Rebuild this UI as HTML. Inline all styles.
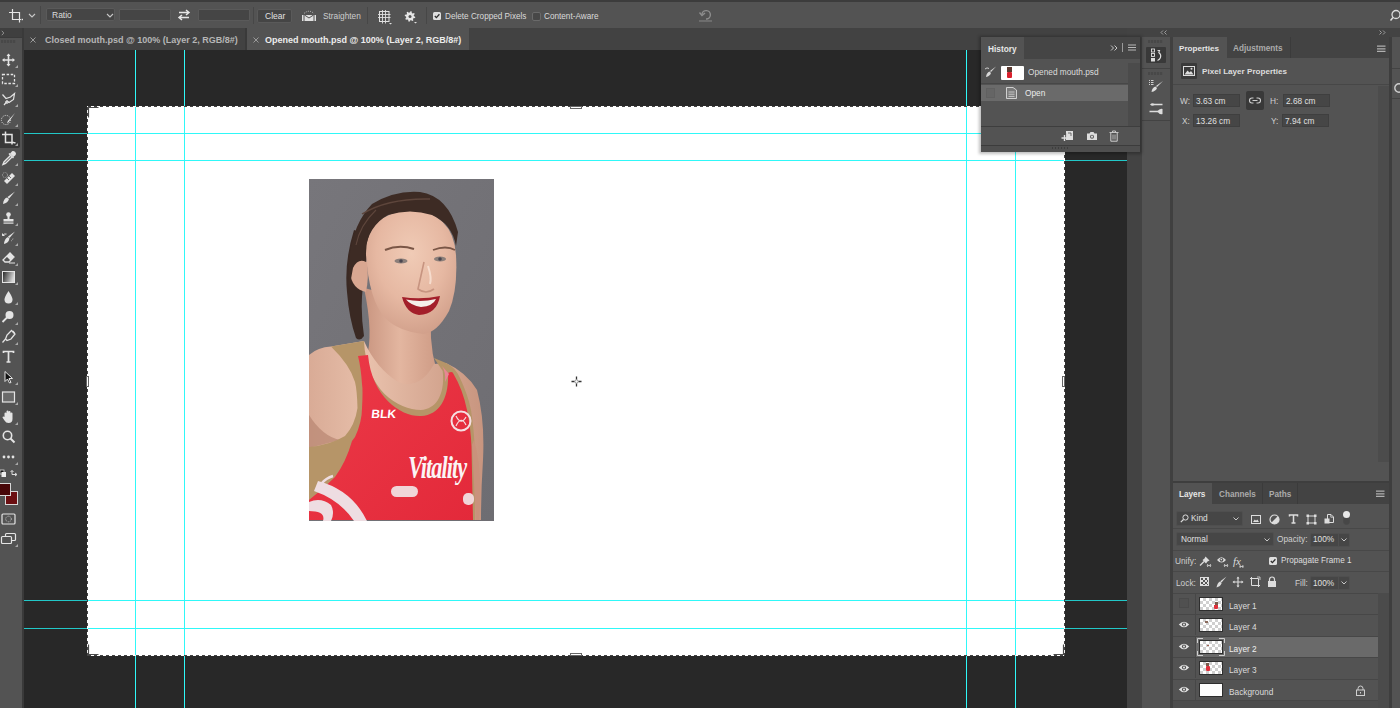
<!DOCTYPE html>
<html><head><meta charset="utf-8">
<style>
*{margin:0;padding:0;box-sizing:border-box}
html,body{width:1400px;height:708px;overflow:hidden;background:#282828;font-family:"Liberation Sans",sans-serif;font-size:8.5px;color:#d0d0d0}
.a{position:absolute}
svg{position:absolute;overflow:visible}
.t{position:absolute;white-space:nowrap;line-height:1}
</style></head><body>

<!-- top options bar -->
<div class="a" style="left:0;top:0;width:1400px;height:2px;background:#3c3c3c"></div>
<div class="a" style="left:0;top:2px;width:1400px;height:26px;background:#535353"></div>


<!-- options bar content -->
<svg style="left:7px;top:7px" width="18" height="17" viewBox="0 0 18 17">
 <path d="M5.5 2V12.5H14" stroke="#e6e6e6" stroke-width="1.2" fill="none"/>
 <path d="M2 5.5H12.5V15.5" stroke="#e6e6e6" stroke-width="1.2" fill="none"/>
 <rect x="14.6" y="11.8" width="1.4" height="1.4" fill="#e6e6e6"/>
</svg>
<svg style="left:28px;top:13px" width="8" height="5" viewBox="0 0 8 5"><path d="M1 1L4 4L7 1" stroke="#c8c8c8" stroke-width="1.1" fill="none"/></svg>
<div class="a" style="left:40px;top:6px;width:1px;height:18px;background:#474747"></div>
<div class="a" style="left:46px;top:8px;width:69px;height:13px;background:#454545;border:1px solid #5a5a5a;border-radius:2px"></div>
<div class="t" style="left:52px;top:11px;font-size:8.5px;color:#dcdcdc">Ratio</div>
<svg style="left:106px;top:13px" width="8" height="5" viewBox="0 0 8 5"><path d="M1 1L4 4L7 1" stroke="#c8c8c8" stroke-width="1.1" fill="none"/></svg>
<div class="a" style="left:119px;top:9px;width:52px;height:12px;background:#454545;border:1px solid #5a5a5a;border-radius:1px"></div>
<div class="a" style="left:198px;top:9px;width:52px;height:12px;background:#454545;border:1px solid #5a5a5a;border-radius:1px"></div>
<svg style="left:177px;top:9px" width="14" height="12" viewBox="0 0 14 12">
 <path d="M2 3.5H11.5M9 1L12 3.5L9 6" stroke="#e6e6e6" stroke-width="1.5" fill="none"/>
 <path d="M12 8.5H2.5M5 6L2 8.5L5 11" stroke="#e6e6e6" stroke-width="1.5" fill="none"/>
</svg>
<div class="a" style="left:253px;top:7px;width:1px;height:17px;background:#474747"></div>
<div class="a" style="left:257px;top:9px;width:35px;height:14px;background:#454545;border:1px solid #5a5a5a;border-radius:2px"></div>
<div class="t" style="left:265px;top:12px;font-size:8.5px;color:#e2e2e2">Clear</div>
<svg style="left:301px;top:9px" width="16" height="13" viewBox="0 0 16 13">
 <path d="M3 4.5Q8 0 13 4.5" stroke="#cfcfcf" stroke-width="0.9" stroke-dasharray="1 1.2" fill="none"/>
 <rect x="1" y="6" width="14" height="6" fill="#e0e0e0"/>
 <path d="M3.5 6L8 9L12.5 6" stroke="#535353" stroke-width="1" fill="none"/>
 <rect x="2.5" y="6" width="1" height="6" fill="#535353"/><rect x="12.5" y="6" width="1" height="6" fill="#535353"/>
</svg>
<div class="t" style="left:323px;top:12px;font-size:8.3px;color:#cdcdcd">Straighten</div>
<div class="a" style="left:367px;top:7px;width:1px;height:17px;background:#474747"></div>
<svg style="left:376px;top:9px" width="18" height="16" viewBox="0 0 18 16">
 <rect x="3.5" y="2.5" width="9.5" height="10" fill="none" stroke="#e0e0e0" stroke-width="1"/>
 <path d="M6.5 1V14.5M9.5 1V14.5M2 5.5H14.5M2 8.5H14.5" stroke="#e0e0e0" stroke-width="0.9"/>
 <path d="M13 14h3l-1.5 1.5z" fill="#e0e0e0"/>
</svg>
<svg style="left:404px;top:9px" width="16" height="16" viewBox="0 0 16 16">
 <path d="M11.30 7.40 L11.20 8.43 L9.60 8.89 L9.24 9.57 L9.75 11.15 L8.94 11.81 L7.49 11.00 L6.76 11.23 L6.00 12.70 L4.97 12.60 L4.51 11.00 L3.83 10.64 L2.25 11.15 L1.59 10.34 L2.40 8.89 L2.17 8.16 L0.70 7.40 L0.80 6.37 L2.40 5.91 L2.76 5.23 L2.25 3.65 L3.06 2.99 L4.51 3.80 L5.24 3.57 L6.00 2.10 L7.03 2.20 L7.49 3.80 L8.17 4.16 L9.75 3.65 L10.41 4.46 L9.60 5.91 L9.83 6.64z" fill="#e6e6e6" transform="rotate(6 6 7.4)"/>
 <circle cx="6" cy="7.4" r="1.5" fill="#535353"/>
 <path d="M10 13h3l-1.5 1.5z" fill="#e0e0e0"/>
</svg>
<div class="a" style="left:426px;top:7px;width:1px;height:17px;background:#474747"></div>
<div class="a" style="left:433px;top:12px;width:8px;height:8px;background:#dedede;border-radius:1.5px"></div>
<svg style="left:433px;top:12px" width="8" height="8" viewBox="0 0 8 8"><path d="M1.8 4L3.4 5.6L6.4 2.2" stroke="#2e2e2e" stroke-width="1.3" fill="none"/></svg>
<div class="t" style="left:445px;top:12.8px;font-size:8.2px;color:#dadada">Delete Cropped Pixels</div>
<div class="a" style="left:532px;top:12px;width:9px;height:9px;background:#474747;border:1px solid #6a6a6a;border-radius:2px"></div>
<div class="t" style="left:544px;top:12.8px;font-size:8.2px;color:#dadada">Content-Aware</div>
<svg style="left:698px;top:9px" width="16" height="13" viewBox="0 0 16 13">
 <path d="M4 5.5A4.2 4.2 0 1 1 8 10" stroke="#8e8e8e" stroke-width="1.4" fill="none"/>
 <path d="M1.5 3.5L4 6.5L7 4" stroke="#8e8e8e" stroke-width="1.4" fill="none"/>
 <path d="M1 12H14" stroke="#8e8e8e" stroke-width="0.9"/>
</svg>

<svg style="left:1389px;top:9px" width="14" height="14" viewBox="0 0 14 14"><circle cx="7" cy="5.5" r="4" fill="none" stroke="#dcdcdc" stroke-width="1.3"/><path d="M4 8.5L1.5 11.5" stroke="#dcdcdc" stroke-width="1.5"/></svg>
<!-- tab bar -->
<div class="a" style="left:24px;top:28px;width:1103px;height:22px;background:#424242"></div>
<div class="a" style="left:247px;top:28px;width:222px;height:22px;background:#535353"></div>


<div class="a" style="left:245px;top:28px;width:2px;height:22px;background:#3a3a3a"></div>
<svg style="left:30px;top:37px" width="6" height="6" viewBox="0 0 6 6"><path d="M0.5 0.5L5.5 5.5M5.5 0.5L0.5 5.5" stroke="#9a9a9a" stroke-width="1"/></svg>
<div class="t" style="left:45px;top:36px;font-size:9px;font-weight:bold;color:#b6b6b6">Closed mouth.psd @ 100% (Layer 2, RGB/8#)</div>
<svg style="left:253px;top:37px" width="6" height="6" viewBox="0 0 6 6"><path d="M0.5 0.5L5.5 5.5M5.5 0.5L0.5 5.5" stroke="#9a9a9a" stroke-width="1"/></svg>
<div class="t" style="left:265px;top:36px;font-size:9px;font-weight:bold;color:#ececec">Opened mouth.psd @ 100% (Layer 2, RGB/8#)</div>

<!-- left toolbar -->
<div class="a" style="left:0;top:28px;width:22px;height:680px;background:#535353"></div>
<div class="a" style="left:22px;top:28px;width:2px;height:680px;background:#3a3a3a"></div>
<div class="a" style="left:0;top:28px;width:22px;height:9px;background:#3f3f3f"></div>

<svg style="left:1px;top:30px" width="4" height="6" viewBox="0 0 4 6"><path d="M0.8 0.8L2.8 3L0.8 5.2" stroke="#9a9a9a" stroke-width="0.9" fill="none"/></svg>
<div class="a" style="left:0;top:37px;width:22px;height:1px;background:#3a3a3a"></div>
<div class="a" style="left:1px;top:40px;width:15px;height:3px;background:repeating-linear-gradient(90deg,#484848 0 2px,#505050 2px 3px)"></div>
<div class="a" style="left:0;top:129px;width:20px;height:19px;background:#383838;border-radius:0 2px 2px 0"></div>
<svg style="left:0px;top:51px" width="18" height="18" viewBox="0 0 18 18"><path d="M8.5 3.5V14.5M3 9H14" stroke="#e4e4e4" stroke-width="1.6"/><path d="M8.5 2.5L10.5 5H6.5zM8.5 15.5L10.5 13H6.5zM2 9L4.5 7V11zM15 9L12.5 7V11z" fill="#e4e4e4"/></svg>
<svg style="left:15px;top:65px" width="3" height="3" viewBox="0 0 3 3"><path d="M3 0V3H0z" fill="#a8a8a8"/></svg>
<svg style="left:0px;top:70px" width="18" height="18" viewBox="0 0 18 18"><rect x="2.5" y="4.5" width="12" height="9" fill="none" stroke="#e4e4e4" stroke-width="1.3" stroke-dasharray="2.5 1.6"/></svg>
<svg style="left:15px;top:84px" width="3" height="3" viewBox="0 0 3 3"><path d="M3 0V3H0z" fill="#a8a8a8"/></svg>
<svg style="left:0px;top:90px" width="18" height="18" viewBox="0 0 18 18"><path d="M2.5 4.5L6 8.5L10.5 7L14.5 3.5L13.5 9.5L9 12.5L7 11.5L4 15" stroke="#e4e4e4" stroke-width="1.2" fill="none"/><circle cx="7" cy="12" r="1.3" fill="none" stroke="#e4e4e4"/></svg>
<svg style="left:15px;top:104px" width="3" height="3" viewBox="0 0 3 3"><path d="M3 0V3H0z" fill="#a8a8a8"/></svg>
<svg style="left:0px;top:110px" width="18" height="18" viewBox="0 0 18 18"><circle cx="6" cy="10" r="4.6" fill="none" stroke="#e4e4e4" stroke-width="1" stroke-dasharray="1 1.2"/><path d="M15 3L10.5 9.5Q9 12.5 7 13.5Q8 10 10 8.5z" fill="#e4e4e4"/></svg>
<svg style="left:15px;top:124px" width="3" height="3" viewBox="0 0 3 3"><path d="M3 0V3H0z" fill="#a8a8a8"/></svg>
<svg style="left:0px;top:129px" width="18" height="18" viewBox="0 0 18 18"><path d="M5.5 2.5V13.5H14" stroke="#e4e4e4" stroke-width="1.5" fill="none"/><path d="M2 5.5H12V15.5" stroke="#e4e4e4" stroke-width="1.5" fill="none"/><rect x="14" y="13" width="1.5" height="1.5" fill="#e4e4e4"/></svg>
<svg style="left:15px;top:143px" width="3" height="3" viewBox="0 0 3 3"><path d="M3 0V3H0z" fill="#a8a8a8"/></svg>
<svg style="left:0px;top:149px" width="18" height="18" viewBox="0 0 18 18"><path d="M12.5 2Q15.5 1.5 16 4.5Q16 6 14.5 7L13.5 8L10 4.5L11 3.5Q11.5 2.5 12.5 2z" fill="#e4e4e4"/><path d="M9 4.5L13.5 9" stroke="#e4e4e4" stroke-width="1.5"/><path d="M10.5 6.5L4 13L3 15.5L5.5 14.5L12 8" stroke="#e4e4e4" stroke-width="1.4" fill="none"/></svg>
<svg style="left:15px;top:163px" width="3" height="3" viewBox="0 0 3 3"><path d="M3 0V3H0z" fill="#a8a8a8"/></svg>
<svg style="left:0px;top:169px" width="18" height="18" viewBox="0 0 18 18"><path d="M4 12L12 4L15 7L7 15z" fill="#e4e4e4"/><path d="M7 9L9 11M9 7L11 9" stroke="#535353" stroke-width="0.8"/><circle cx="5" cy="6" r="2.5" fill="none" stroke="#e4e4e4" stroke-width="0.6" stroke-dasharray="0.8 0.8"/></svg>
<svg style="left:15px;top:183px" width="3" height="3" viewBox="0 0 3 3"><path d="M3 0V3H0z" fill="#a8a8a8"/></svg>
<svg style="left:0px;top:189px" width="18" height="18" viewBox="0 0 18 18"><path d="M15 2.5L9 9.5L7.5 8z" fill="#e4e4e4"/><path d="M7 8.5Q3.5 9.5 3 15Q8 14 9 10z" fill="#e4e4e4"/></svg>
<svg style="left:15px;top:203px" width="3" height="3" viewBox="0 0 3 3"><path d="M3 0V3H0z" fill="#a8a8a8"/></svg>
<svg style="left:0px;top:209px" width="18" height="18" viewBox="0 0 18 18"><circle cx="8.5" cy="5.5" r="2.3" fill="#e4e4e4"/><path d="M7.5 7H9.5V10H13.5V12.5H3.5V10H7.5z" fill="#e4e4e4"/><rect x="3.5" y="13.5" width="10" height="1.2" fill="#e4e4e4"/></svg>
<svg style="left:15px;top:223px" width="3" height="3" viewBox="0 0 3 3"><path d="M3 0V3H0z" fill="#a8a8a8"/></svg>
<svg style="left:0px;top:229px" width="18" height="18" viewBox="0 0 18 18"><path d="M15 2.5L9.5 9L8 7.5z" fill="#e4e4e4"/><path d="M8 8Q4.5 9.5 4 15Q8.5 14 9.5 9.5z" fill="#e4e4e4"/><path d="M2.5 6.5Q4 4.5 6.5 5M2.5 6.5L2.5 4.5M2.5 6.5L4.5 6.5" stroke="#e4e4e4" stroke-width="1" fill="none"/><path d="M11 12Q13 11 13 9" stroke="#e4e4e4" stroke-width="0.7" stroke-dasharray="0.8 0.8" fill="none"/></svg>
<svg style="left:15px;top:243px" width="3" height="3" viewBox="0 0 3 3"><path d="M3 0V3H0z" fill="#a8a8a8"/></svg>
<svg style="left:0px;top:249px" width="18" height="18" viewBox="0 0 18 18"><path d="M3 11L10 4L14 8L9 13H5z" fill="none" stroke="#e4e4e4" stroke-width="1.3"/><path d="M6.5 7.5L10.5 11.5L14 8L10 4z" fill="#e4e4e4"/><path d="M9 14H15" stroke="#e4e4e4" stroke-width="1"/></svg>
<svg style="left:15px;top:263px" width="3" height="3" viewBox="0 0 3 3"><path d="M3 0V3H0z" fill="#a8a8a8"/></svg>
<svg style="left:0px;top:268px" width="18" height="18" viewBox="0 0 18 18"><defs><linearGradient id="g1" x1="0" y1="0" x2="1" y2="0.3"><stop offset="0" stop-color="#202020"/><stop offset="1" stop-color="#d8d8d8"/></linearGradient></defs><rect x="2.5" y="3.5" width="12" height="11" fill="url(#g1)" stroke="#e4e4e4" stroke-width="1"/></svg>
<svg style="left:15px;top:282px" width="3" height="3" viewBox="0 0 3 3"><path d="M3 0V3H0z" fill="#a8a8a8"/></svg>
<svg style="left:0px;top:288px" width="18" height="18" viewBox="0 0 18 18"><path d="M8.5 3Q12.5 9 12.5 11.5A4 4 0 0 1 4.5 11.5Q4.5 9 8.5 3z" fill="#e4e4e4"/></svg>
<svg style="left:15px;top:302px" width="3" height="3" viewBox="0 0 3 3"><path d="M3 0V3H0z" fill="#a8a8a8"/></svg>
<svg style="left:0px;top:308px" width="18" height="18" viewBox="0 0 18 18"><circle cx="9.5" cy="7" r="4" fill="#e4e4e4"/><path d="M7 9.5L2.5 14" stroke="#e4e4e4" stroke-width="1.8"/></svg>
<svg style="left:15px;top:322px" width="3" height="3" viewBox="0 0 3 3"><path d="M3 0V3H0z" fill="#a8a8a8"/></svg>
<svg style="left:0px;top:328px" width="18" height="18" viewBox="0 0 18 18"><path d="M11.5 2.5L15 6L11 11L7 12.5L5.5 11L7 7z" fill="none" stroke="#e4e4e4" stroke-width="1.3"/><path d="M5.5 11L2.5 14.5" stroke="#e4e4e4" stroke-width="1.2"/><path d="M12.5 3L14.5 5" stroke="#e4e4e4" stroke-width="1.6"/></svg>
<svg style="left:15px;top:342px" width="3" height="3" viewBox="0 0 3 3"><path d="M3 0V3H0z" fill="#a8a8a8"/></svg>
<svg style="left:0px;top:348px" width="18" height="18" viewBox="0 0 18 18"><path d="M3.5 5V3.5H13.5V5M8.5 3.5V14M6.5 14H10.5" stroke="#e4e4e4" stroke-width="1.7" fill="none"/></svg>
<svg style="left:0px;top:368px" width="18" height="18" viewBox="0 0 18 18"><path d="M5 3.5L12.5 10.5H9L11 14.5L9.5 15L7.5 11L5 13.5z" fill="#111" stroke="#e4e4e4" stroke-width="1"/></svg>
<svg style="left:15px;top:382px" width="3" height="3" viewBox="0 0 3 3"><path d="M3 0V3H0z" fill="#a8a8a8"/></svg>
<svg style="left:0px;top:388px" width="18" height="18" viewBox="0 0 18 18"><rect x="2.5" y="4" width="12" height="10" fill="#6a6a6a" stroke="#e4e4e4" stroke-width="1.2"/></svg>
<svg style="left:15px;top:402px" width="3" height="3" viewBox="0 0 3 3"><path d="M3 0V3H0z" fill="#a8a8a8"/></svg>
<svg style="left:0px;top:408px" width="18" height="18" viewBox="0 0 18 18"><path d="M4.5 9V5.5A1 1 0 0 1 6.5 5.5V8.5V3.5A1 1 0 0 1 8.5 3.5V8.5V4A1 1 0 0 1 10.5 4V8.5V5.5A1 1 0 0 1 12.5 5.5V11Q12.5 15 8.5 15Q6 15 4.5 12.5L2.5 9.5Q2.5 8.5 3.5 8.5z" fill="#e4e4e4"/></svg>
<svg style="left:15px;top:422px" width="3" height="3" viewBox="0 0 3 3"><path d="M3 0V3H0z" fill="#a8a8a8"/></svg>
<svg style="left:0px;top:428px" width="18" height="18" viewBox="0 0 18 18"><circle cx="7.5" cy="7.5" r="4.2" fill="none" stroke="#e4e4e4" stroke-width="1.6"/><path d="M10.5 10.5L14.5 14.5" stroke="#e4e4e4" stroke-width="2"/></svg>
<svg style="left:0px;top:448px" width="18" height="18" viewBox="0 0 18 18"><circle cx="4" cy="9" r="1.4" fill="#e4e4e4"/><circle cx="8.5" cy="9" r="1.4" fill="#e4e4e4"/><circle cx="13" cy="9" r="1.4" fill="#e4e4e4"/></svg>
<svg style="left:15px;top:462px" width="3" height="3" viewBox="0 0 3 3"><path d="M3 0V3H0z" fill="#a8a8a8"/></svg>
<svg style="left:0px;top:469px" width="20" height="10" viewBox="0 0 20 10"><rect x="0" y="1" width="4" height="4" fill="#111" stroke="#ddd" stroke-width="0.8"/><rect x="1.5" y="3" width="4.5" height="5" fill="#eee"/><path d="M12 1.5V5.5H16.5M15 4L17 5.5L15 7M12 1.5L10.5 3M12 1.5L13.5 3" stroke="#ddd" stroke-width="1" fill="none"/></svg>
<div class="a" style="left:5px;top:491px;width:13px;height:14px;background:#6b0f12;border:1.2px solid #d8d8d8"></div>
<div class="a" style="left:0px;top:483px;width:11px;height:13px;background:#470608;border:1.2px solid #d8d8d8;border-left:none"></div>
<svg style="left:0px;top:510px" width="18" height="18" viewBox="0 0 18 18"><rect x="2" y="4" width="13" height="10" rx="1" fill="none" stroke="#e4e4e4" stroke-width="1.2"/><circle cx="8.5" cy="9" r="2.8" fill="none" stroke="#e4e4e4" stroke-width="0.8" stroke-dasharray="1 1"/></svg>
<svg style="left:0px;top:530px" width="18" height="18" viewBox="0 0 18 18"><rect x="5.5" y="3.5" width="10" height="7" rx="1" fill="none" stroke="#e4e4e4" stroke-width="1.2"/><rect x="1.5" y="6.5" width="10" height="7" rx="1" fill="#535353" stroke="#e4e4e4" stroke-width="1.2"/></svg>
<svg style="left:15px;top:544px" width="3" height="3" viewBox="0 0 3 3"><path d="M3 0V3H0z" fill="#a8a8a8"/></svg>

<!-- right dock -->
<div class="a" style="left:1127px;top:28px;width:15px;height:680px;background:#434343"></div>
<div class="a" style="left:1142px;top:28px;width:258px;height:9px;background:#434343"></div>
<div class="a" style="left:1142px;top:37px;width:28px;height:671px;background:#535353"></div>
<div class="a" style="left:1170px;top:37px;width:3px;height:671px;background:#404040"></div>
<div class="a" style="left:1173px;top:37px;width:216px;height:671px;background:#535353"></div>
<div class="a" style="left:1389px;top:37px;width:3px;height:671px;background:#3e3e3e"></div>
<div class="a" style="left:1392px;top:37px;width:8px;height:671px;background:#535353"></div>


<!-- dock header arrows -->
<svg style="left:1160px;top:30px" width="7" height="5" viewBox="0 0 7 5"><path d="M3 0.5L1 2.5L3 4.5M6.5 0.5L4.5 2.5L6.5 4.5" stroke="#a8a8a8" stroke-width="0.9" fill="none"/></svg>
<svg style="left:1379px;top:30px" width="7" height="5" viewBox="0 0 7 5"><path d="M0.5 0.5L2.5 2.5L0.5 4.5M4 0.5L6 2.5L4 4.5" stroke="#a8a8a8" stroke-width="0.9" fill="none"/></svg>
<!-- icon column -->
<div class="a" style="left:1148px;top:40px;width:15px;height:3px;background:repeating-linear-gradient(90deg,#484848 0 2px,#505050 2px 3px)"></div>
<div class="a" style="left:1146px;top:47px;width:20px;height:16px;background:#393939;border-radius:1px"></div>
<svg style="left:1149px;top:48px" width="14" height="14" viewBox="0 0 14 14">
 <rect x="2.5" y="1" width="3" height="3" fill="none" stroke="#ddd" stroke-width="0.9"/>
 <rect x="2.5" y="5.5" width="3" height="3" fill="none" stroke="#ddd" stroke-width="0.9"/>
 <rect x="2" y="10" width="4" height="3.5" fill="#ddd"/>
 <path d="M8.5 2.5H10.5L9.8 4.5Q12.5 6.5 11.5 9.5Q10.8 11.5 8.5 12.5" stroke="#ddd" stroke-width="1.1" fill="none"/>
</svg>
<div class="a" style="left:1142px;top:68px;width:28px;height:1px;background:#434343"></div>
<div class="a" style="left:1148px;top:72px;width:15px;height:3px;background:repeating-linear-gradient(90deg,#484848 0 2px,#505050 2px 3px)"></div>
<svg style="left:1148px;top:79px" width="16" height="14" viewBox="0 0 16 14">
 <path d="M1 1.5H2M1 3.5H2M1 5.5H2M3 1.5H5.5M3 3.5H5.5M3 5.5H5.5" stroke="#ddd" stroke-width="0.9"/>
 <path d="M15 2L9 8L8 7z" fill="#ddd"/><path d="M7.5 7.5Q4 8.5 3.5 13Q8 12 9 9z" fill="#ddd"/>
</svg>
<svg style="left:1148px;top:101px" width="16" height="14" viewBox="0 0 16 14">
 <path d="M6 3.5H14.5M1.5 10.5H10" stroke="#ddd" stroke-width="1.3"/>
 <path d="M2 3.5Q4.5 1 7 3.5Q4.5 6 2 3.5z" fill="#ddd"/>
 <path d="M9 10.5Q12 7 14.5 8V13Q12 14 9 10.5z" fill="#ddd"/>
</svg>
<div class="a" style="left:1142px;top:120px;width:28px;height:1px;background:#434343"></div>
<div class="a" style="left:1392px;top:68px;width:8px;height:1px;background:#434343"></div>
<div class="a" style="left:1392px;top:98px;width:8px;height:1px;background:#434343"></div>
<svg style="left:1393px;top:82px" width="7" height="12" viewBox="0 0 7 12"><circle cx="6" cy="6" r="4.2" fill="none" stroke="#cfcfcf" stroke-width="1.4"/></svg>

<!-- Properties panel -->
<div class="a" style="left:1173px;top:37px;width:216px;height:21px;background:#434343"></div>
<div class="a" style="left:1173px;top:37px;width:54px;height:21px;background:#535353"></div>
<div class="a" style="left:1290px;top:37px;width:1px;height:21px;background:#3b3b3b"></div>
<div class="t" style="left:1179px;top:45px;font-size:8.1px;font-weight:bold;color:#e6e6e6">Properties</div>
<div class="t" style="left:1233px;top:45px;font-size:8.2px;font-weight:bold;color:#ababab">Adjustments</div>
<svg style="left:1377px;top:45px" width="9" height="8" viewBox="0 0 9 8"><path d="M0 1.2H8.5M0 3.8H8.5M0 6.4H8.5" stroke="#b0b0b0" stroke-width="1.2"/></svg>
<div class="a" style="left:1181px;top:63px;width:16px;height:16px;background:#3a3a3a;border-radius:1px"></div>
<svg style="left:1183px;top:66px" width="12" height="10" viewBox="0 0 12 10"><rect x="0.5" y="0.5" width="11" height="9" fill="none" stroke="#ddd" stroke-width="1"/><path d="M1.5 8.5L4.5 4.5L6.5 6.5L8 5L10.5 8.5z" fill="#ddd"/><circle cx="8.5" cy="2.8" r="1" fill="#ddd"/></svg>
<div class="t" style="left:1202px;top:68px;font-size:8.1px;font-weight:bold;color:#dedede">Pixel Layer Properties</div>
<div class="a" style="left:1173px;top:84px;width:216px;height:1px;background:#474747"></div>
<div class="a" style="left:1378px;top:86px;width:11px;height:376px;background:#4c4c4c"></div>
<div class="t" style="left:1180px;top:97px;font-size:8.3px;color:#cfcfcf">W:</div>
<div class="a" style="left:1193px;top:94px;width:47px;height:13px;background:#464646;border:1px solid #3f3f3f"></div>
<div class="t" style="left:1196px;top:97px;font-size:8.3px;color:#e0e0e0">3.63 cm</div>
<div class="a" style="left:1246px;top:91px;width:18px;height:19px;background:#393939;border-radius:2px"></div>
<svg style="left:1249px;top:97px" width="12" height="7" viewBox="0 0 12 7"><path d="M4.5 1H3A2.5 2.5 0 0 0 3 6H4.5M7.5 1H9A2.5 2.5 0 0 1 9 6H7.5M3.5 3.5H8.5" stroke="#cfcfcf" stroke-width="1.1" fill="none"/></svg>
<div class="t" style="left:1270px;top:97px;font-size:8.3px;color:#cfcfcf">H:</div>
<div class="a" style="left:1283px;top:94px;width:47px;height:13px;background:#464646;border:1px solid #3f3f3f"></div>
<div class="t" style="left:1286px;top:97px;font-size:8.3px;color:#e0e0e0">2.68 cm</div>
<div class="t" style="left:1182px;top:117px;font-size:8.3px;color:#cfcfcf">X:</div>
<div class="a" style="left:1193px;top:114px;width:47px;height:13px;background:#464646;border:1px solid #3f3f3f"></div>
<div class="t" style="left:1196px;top:117px;font-size:8.3px;color:#e0e0e0">13.26 cm</div>
<div class="t" style="left:1271px;top:117px;font-size:8.3px;color:#cfcfcf">Y:</div>
<div class="a" style="left:1282px;top:114px;width:47px;height:13px;background:#464646;border:1px solid #3f3f3f"></div>
<div class="t" style="left:1285px;top:117px;font-size:8.3px;color:#e0e0e0">7.94 cm</div>


<!-- Layers panel -->
<div class="a" style="left:1173px;top:481px;width:216px;height:2px;background:#3e3e3e"></div>
<div class="a" style="left:1173px;top:483px;width:216px;height:21px;background:#434343"></div>
<div class="a" style="left:1173px;top:483px;width:39px;height:21px;background:#535353"></div>
<div class="a" style="left:1262px;top:483px;width:1px;height:21px;background:#3b3b3b"></div>
<div class="a" style="left:1297px;top:483px;width:1px;height:21px;background:#3b3b3b"></div>
<div class="t" style="left:1179px;top:491px;font-size:8.2px;font-weight:bold;color:#e6e6e6">Layers</div>
<div class="t" style="left:1219px;top:491px;font-size:8.2px;font-weight:bold;color:#ababab">Channels</div>
<div class="t" style="left:1269px;top:491px;font-size:8.2px;font-weight:bold;color:#ababab">Paths</div>
<svg style="left:1376px;top:490px" width="9" height="8" viewBox="0 0 9 8"><path d="M0 1.2H8.5M0 3.8H8.5M0 6.4H8.5" stroke="#b0b0b0" stroke-width="1.2"/></svg>

<div class="a" style="left:1176px;top:511px;width:67px;height:15px;background:#464646;border:1px solid #4f4f4f;border-radius:2px"></div>
<svg style="left:1180px;top:514px" width="9" height="9" viewBox="0 0 9 9"><circle cx="5.5" cy="3.5" r="2.6" fill="none" stroke="#ddd" stroke-width="1"/><path d="M3.5 5.5L0.8 8.2" stroke="#ddd" stroke-width="1.2"/></svg>
<div class="t" style="left:1191px;top:514px;font-size:8.3px;color:#e0e0e0">Kind</div>
<svg style="left:1233px;top:517px" width="6" height="4" viewBox="0 0 6 4"><path d="M0.5 0.5L3 3L5.5 0.5" stroke="#c8c8c8" stroke-width="1" fill="none"/></svg>
<svg style="left:1250.5px;top:514.5px" width="10" height="9" viewBox="0 0 10 9"><rect x="0.5" y="0.5" width="9" height="8" fill="none" stroke="#ddd" stroke-width="1"/><path d="M2 7L3.8 4.5L5 5.8L6.3 4.5L8 7z" fill="#ddd"/></svg>
<svg style="left:1269px;top:513.5px" width="11" height="11" viewBox="0 0 11 11"><circle cx="5.5" cy="5.5" r="4.5" fill="none" stroke="#ddd" stroke-width="1.2"/><path d="M8.7 2.3A4.5 4.5 0 0 1 2.3 8.7z" fill="#ddd"/></svg>
<svg style="left:1288px;top:513.5px" width="11" height="10" viewBox="0 0 11 10"><path d="M1.5 2.5V1H9.5V2.5M5.5 1V9M3.5 9H7.5" stroke="#ddd" stroke-width="1.5" fill="none"/></svg>
<svg style="left:1305.5px;top:513.5px" width="11" height="11" viewBox="0 0 11 11"><rect x="2" y="2" width="7" height="7" fill="none" stroke="#ddd" stroke-width="1"/><rect x="0.5" y="0.5" width="2.5" height="2.5" fill="#ddd"/><rect x="8" y="0.5" width="2.5" height="2.5" fill="#ddd"/><rect x="0.5" y="8" width="2.5" height="2.5" fill="#ddd"/><rect x="8" y="8" width="2.5" height="2.5" fill="#ddd"/></svg>
<svg style="left:1324px;top:514px" width="10" height="10" viewBox="0 0 10 10"><path d="M3.5 0.5H7L9.5 3V8.5H3.5z" fill="none" stroke="#ddd" stroke-width="1"/><path d="M6.8 0.5V3.2H9.5" stroke="#ddd" stroke-width="0.8" fill="none"/><rect x="0.5" y="4.5" width="5" height="5" fill="#ddd"/></svg>
<div class="a" style="left:1343px;top:512px;width:7px;height:13px;background:#474747;border:1px solid #4a4a4a;border-radius:3.5px"></div>
<div class="a" style="left:1343px;top:511px;width:7px;height:7px;background:#e8e8e8;border-radius:50%"></div>
<div class="a" style="left:1173px;top:528px;width:216px;height:1px;background:#484848"></div>

<div class="a" style="left:1176px;top:532px;width:98px;height:14px;background:#464646;border:1px solid #4f4f4f;border-radius:2px"></div>
<div class="t" style="left:1181px;top:535px;font-size:8.3px;color:#e0e0e0">Normal</div>
<svg style="left:1264px;top:538px" width="6" height="4" viewBox="0 0 6 4"><path d="M0.5 0.5L3 3L5.5 0.5" stroke="#c8c8c8" stroke-width="1" fill="none"/></svg>
<div class="t" style="left:1277px;top:535px;font-size:8.3px;color:#cfcfcf">Opacity:</div>
<div class="a" style="left:1310px;top:533px;width:40px;height:14px;background:#464646;border:1px solid #4f4f4f;border-radius:2px"></div>
<div class="a" style="left:1338px;top:533px;width:1px;height:14px;background:#4f4f4f"></div>
<div class="t" style="left:1313px;top:535px;font-size:8.3px;color:#e0e0e0">100%</div>
<svg style="left:1341px;top:538px" width="6" height="4" viewBox="0 0 6 4"><path d="M0.5 0.5L3 3L5.5 0.5" stroke="#c8c8c8" stroke-width="1" fill="none"/></svg>
<div class="a" style="left:1173px;top:550px;width:216px;height:1px;background:#484848"></div>

<div class="t" style="left:1175px;top:557px;font-size:8.3px;color:#cfcfcf">Unify:</div>
<svg style="left:1199px;top:555px" width="14" height="13" viewBox="0 0 14 13"><path d="M6.5 1.5L10.5 5.5L8.5 6.5L7 8.5L3.5 5L5.5 3.5z" fill="#ddd"/><path d="M5 6.5L1 10.5" stroke="#ddd" stroke-width="1.2"/><path d="M8.5 10.5H11.5M8.8 9Q7.8 10.5 8.8 12M11.2 9Q12.2 10.5 11.2 12" stroke="#ddd" stroke-width="0.8" fill="none"/></svg>
<svg style="left:1216px;top:555px" width="14" height="13" viewBox="0 0 14 13"><path d="M1 5Q5.5 -0.5 10 5Q5.5 10 1 5z" fill="#ddd"/><circle cx="5.5" cy="4.8" r="1.9" fill="#535353"/><circle cx="5.3" cy="4.6" r="0.8" fill="#ddd"/><path d="M8.5 10.5H11.5M8.8 9Q7.8 10.5 8.8 12M11.2 9Q12.2 10.5 11.2 12" stroke="#ddd" stroke-width="0.8" fill="none"/></svg>
<div class="t" style="left:1233px;top:556px;font-size:11px;font-style:italic;font-family:'Liberation Serif',serif;color:#ddd">fx</div>
<svg style="left:1238px;top:564px" width="7" height="5" viewBox="0 0 7 5"><path d="M2 2.5H5M2.3 1Q1.3 2.5 2.3 4M4.7 1Q5.7 2.5 4.7 4" stroke="#ddd" stroke-width="0.8" fill="none"/></svg>
<div class="a" style="left:1269px;top:557px;width:8px;height:8px;background:#dedede;border-radius:1.5px"></div>
<svg style="left:1269px;top:557px" width="8" height="8" viewBox="0 0 8 8"><path d="M1.8 4L3.4 5.6L6.4 2.2" stroke="#2e2e2e" stroke-width="1.3" fill="none"/></svg>
<div class="t" style="left:1281px;top:557px;font-size:8.2px;color:#dedede">Propagate Frame 1</div>
<div class="a" style="left:1173px;top:571px;width:216px;height:1px;background:#484848"></div>

<div class="t" style="left:1176px;top:579px;font-size:8.3px;color:#cfcfcf">Lock:</div>
<div class="a" style="left:1200px;top:577px;width:9px;height:9px;border:1px solid #ddd;background-color:#535353;background-image:linear-gradient(45deg,#ddd 25%,transparent 25%,transparent 75%,#ddd 75%),linear-gradient(45deg,#ddd 25%,transparent 25%,transparent 75%,#ddd 75%);background-size:4px 4px;background-position:0 0,2px 2px"></div>
<svg style="left:1216px;top:576px" width="11" height="12" viewBox="0 0 11 12"><path d="M10.5 0.5L5.5 6.5L4.3 5.3z" fill="#ddd"/><path d="M4 5.5Q1.5 6.5 0.5 11.5Q4.5 10.5 5.7 7z" fill="#ddd"/></svg>
<svg style="left:1232px;top:576px" width="12" height="12" viewBox="0 0 12 12"><path d="M6 1.5V10.5M1.5 6H10.5" stroke="#ddd" stroke-width="1.1"/><path d="M6 0.5L7.5 2.5H4.5zM6 11.5L7.5 9.5H4.5zM0.5 6L2.5 4.5V7.5zM11.5 6L9.5 4.5V7.5z" fill="#ddd"/></svg>
<svg style="left:1249px;top:576px" width="12" height="12" viewBox="0 0 12 12"><path d="M2.5 1V9.5H11M1 2.5H9.5V11" stroke="#ddd" stroke-width="1" fill="none"/><path d="M8 1L11 1L11 4" stroke="#ddd" stroke-width="0.8" fill="none"/></svg>
<svg style="left:1267px;top:576px" width="10" height="11" viewBox="0 0 10 11"><path d="M2.5 5V3.5A2.5 2.5 0 0 1 7.5 3.5V5" stroke="#ddd" stroke-width="1.2" fill="none"/><rect x="1" y="5" width="8" height="6" fill="#ddd"/></svg>
<div class="t" style="left:1295px;top:579px;font-size:8.3px;color:#cfcfcf">Fill:</div>
<div class="a" style="left:1310px;top:576px;width:40px;height:14px;background:#464646;border:1px solid #4f4f4f;border-radius:2px"></div>
<div class="a" style="left:1338px;top:576px;width:1px;height:14px;background:#4f4f4f"></div>
<div class="t" style="left:1313px;top:579px;font-size:8.3px;color:#e0e0e0">100%</div>
<svg style="left:1341px;top:581px" width="6" height="4" viewBox="0 0 6 4"><path d="M0.5 0.5L3 3L5.5 0.5" stroke="#c8c8c8" stroke-width="1" fill="none"/></svg>

<div class="a" style="left:1173px;top:593px;width:205px;height:107px;background:#535353"></div>
<div class="a" style="left:1378px;top:593px;width:11px;height:115px;background:#4b4b4b"></div>
<div class="a" style="left:1173px;top:700px;width:205px;height:8px;background:#4d4d4d"></div>
<div class="a" style="left:1173px;top:593px;width:205px;height:1px;background:#474747"></div>
<div class="a" style="left:1195px;top:593px;width:1px;height:21px;background:#474747"></div>
<div class="a" style="left:1179px;top:598px;width:10px;height:10px;border:1px solid #4a4a4a;background:#505050"></div>
<div class="a" style="left:1199px;top:597px;width:24px;height:14px;background-color:#fff;background-image:linear-gradient(45deg,#cfcfcf 25%,transparent 25%,transparent 75%,#cfcfcf 75%),linear-gradient(45deg,#cfcfcf 25%,transparent 25%,transparent 75%,#cfcfcf 75%);background-size:6px 6px;background-position:0 0,3px 3px;border:1px solid #2e2e2e"></div>
<div class="a" style="left:1214.5px;top:602px;width:3px;height:3px;background:#7a5a4c"></div><div class="a" style="left:1214px;top:605px;width:4px;height:4px;background:#e0303c;border-radius:0 0 1px 1px"></div>
<div class="t" style="left:1229px;top:601.8px;font-size:8.3px;color:#dcdcdc">Layer 1</div>
<div class="a" style="left:1173px;top:614px;width:205px;height:1px;background:#474747"></div>
<div class="a" style="left:1195px;top:614px;width:1px;height:21px;background:#474747"></div>
<svg style="left:1178px;top:620px" width="12" height="9" viewBox="0 0 12 9"><path d="M0.8 4.5Q6 -1 11.2 4.5Q6 10 0.8 4.5z" fill="#e4e4e4"/><circle cx="6" cy="4.5" r="2.1" fill="#535353"/><circle cx="6" cy="4.5" r="1" fill="#e4e4e4"/></svg>
<div class="a" style="left:1199px;top:618px;width:24px;height:14px;background-color:#fff;background-image:linear-gradient(45deg,#cfcfcf 25%,transparent 25%,transparent 75%,#cfcfcf 75%),linear-gradient(45deg,#cfcfcf 25%,transparent 25%,transparent 75%,#cfcfcf 75%);background-size:6px 6px;background-position:0 0,3px 3px;border:1px solid #2e2e2e"></div>
<div class="a" style="left:1205px;top:621px;width:3px;height:2px;background:#8a6a5c"></div>
<div class="t" style="left:1229px;top:622.8px;font-size:8.3px;color:#dcdcdc">Layer 4</div>
<div class="a" style="left:1173px;top:636px;width:205px;height:1px;background:#474747"></div>
<div class="a" style="left:1195px;top:636px;width:1px;height:21px;background:#474747"></div>
<div class="a" style="left:1196px;top:637px;width:182px;height:20px;background:#6a6a6a"></div>
<svg style="left:1178px;top:642px" width="12" height="9" viewBox="0 0 12 9"><path d="M0.8 4.5Q6 -1 11.2 4.5Q6 10 0.8 4.5z" fill="#e4e4e4"/><circle cx="6" cy="4.5" r="2.1" fill="#535353"/><circle cx="6" cy="4.5" r="1" fill="#e4e4e4"/></svg>
<div class="a" style="left:1199px;top:640px;width:24px;height:14px;background-color:#fff;background-image:linear-gradient(45deg,#cfcfcf 25%,transparent 25%,transparent 75%,#cfcfcf 75%),linear-gradient(45deg,#cfcfcf 25%,transparent 25%,transparent 75%,#cfcfcf 75%);background-size:6px 6px;background-position:0 0,3px 3px;border:1px solid #2e2e2e"></div>
<div class="a" style="left:1207px;top:645px;width:2px;height:1px;background:#a06050"></div>
<svg style="left:1197px;top:638px" width="28" height="18" viewBox="0 0 28 18"><path d="M0.5 5V0.5H6M22 0.5H27.5V5M27.5 13V17.5H22M6 17.5H0.5V13" stroke="#d0d0d0" stroke-width="1" fill="none"/></svg>
<div class="t" style="left:1229px;top:644.8px;font-size:8.3px;color:#f0f0f0">Layer 2</div>
<div class="a" style="left:1173px;top:657px;width:205px;height:1px;background:#474747"></div>
<div class="a" style="left:1195px;top:657px;width:1px;height:21px;background:#474747"></div>
<svg style="left:1178px;top:663px" width="12" height="9" viewBox="0 0 12 9"><path d="M0.8 4.5Q6 -1 11.2 4.5Q6 10 0.8 4.5z" fill="#e4e4e4"/><circle cx="6" cy="4.5" r="2.1" fill="#535353"/><circle cx="6" cy="4.5" r="1" fill="#e4e4e4"/></svg>
<div class="a" style="left:1199px;top:661px;width:24px;height:14px;background-color:#fff;background-image:linear-gradient(45deg,#cfcfcf 25%,transparent 25%,transparent 75%,#cfcfcf 75%),linear-gradient(45deg,#cfcfcf 25%,transparent 25%,transparent 75%,#cfcfcf 75%);background-size:6px 6px;background-position:0 0,3px 3px;border:1px solid #2e2e2e"></div>
<div class="a" style="left:1206px;top:663px;width:3px;height:3px;background:#7a5a4c"></div><div class="a" style="left:1205.5px;top:666px;width:4px;height:5px;background:#e0303c;border-radius:1px"></div>
<div class="t" style="left:1229px;top:665.8px;font-size:8.3px;color:#dcdcdc">Layer 3</div>
<div class="a" style="left:1173px;top:679px;width:205px;height:1px;background:#474747"></div>
<div class="a" style="left:1195px;top:679px;width:1px;height:21px;background:#474747"></div>
<svg style="left:1178px;top:685px" width="12" height="9" viewBox="0 0 12 9"><path d="M0.8 4.5Q6 -1 11.2 4.5Q6 10 0.8 4.5z" fill="#e4e4e4"/><circle cx="6" cy="4.5" r="2.1" fill="#535353"/><circle cx="6" cy="4.5" r="1" fill="#e4e4e4"/></svg>
<div class="a" style="left:1199px;top:683px;width:24px;height:14px;background:#fff;border:1px solid #2e2e2e"></div>
<div class="t" style="left:1229px;top:687.8px;font-size:8.3px;color:#dcdcdc">Background</div>
<div class="a" style="left:1173px;top:700px;width:205px;height:1px;background:#474747"></div>
<svg style="left:1356px;top:685px" width="9" height="11" viewBox="0 0 9 11"><path d="M2 5V3.5A2.5 2.5 0 0 1 7 3.5V5" stroke="#cfcfcf" stroke-width="1" fill="none"/><rect x="0.5" y="5" width="8" height="5.5" fill="none" stroke="#cfcfcf" stroke-width="1"/><rect x="4" y="7" width="1" height="1.5" fill="#cfcfcf"/></svg>

<!-- canvas document -->
<div class="a" style="left:87px;top:106px;width:978px;height:550px;background:#fff"></div>


<!-- photo -->
<svg style="left:309px;top:179px" width="185" height="342" viewBox="309 179 185 342">
 <defs>
  <radialGradient id="skinF" cx="0.5" cy="0.35" r="0.7"><stop offset="0" stop-color="#f0cbb6"/><stop offset="0.55" stop-color="#e6b8a2"/><stop offset="1" stop-color="#cf9d88"/></radialGradient>
  <linearGradient id="bgG" x1="0" y1="0" x2="1" y2="1"><stop offset="0" stop-color="#77767b"/><stop offset="1" stop-color="#6e6d72"/></linearGradient>
  <linearGradient id="armL" x1="0" y1="0" x2="1" y2="0"><stop offset="0" stop-color="#d9ab96"/><stop offset="0.35" stop-color="#e8c0ab"/><stop offset="1" stop-color="#c8957f"/></linearGradient>
  <linearGradient id="neckG" x1="0" y1="0" x2="1" y2="0"><stop offset="0" stop-color="#c99580"/><stop offset="0.5" stop-color="#e3b6a0"/><stop offset="1" stop-color="#cf9c86"/></linearGradient>
  <linearGradient id="redG" x1="0" y1="0" x2="1" y2="1"><stop offset="0" stop-color="#ec3a48"/><stop offset="1" stop-color="#e3293a"/></linearGradient>
  <linearGradient id="rArm" x1="0" y1="0" x2="1" y2="0"><stop offset="0" stop-color="#b88270"/><stop offset="0.5" stop-color="#d9a792"/><stop offset="1" stop-color="#c2907c"/></linearGradient>
 </defs>
 <rect x="309" y="179" width="185" height="342" fill="url(#bgG)"/>
 <!-- ponytail -->
 <path d="M354 230Q344 262 347 292Q349 318 356 338Q360 342 364 336Q360 310 363 285Q366 255 372 236z" fill="#3a2923"/>
 <!-- neck -->
 <path d="M364 288Q374 335 366 360Q390 392 415 392Q432 380 436 368Q428 340 432 305z" fill="url(#neckG)"/>
 <!-- shoulders skin -->
 <path d="M309 355Q318 347 331 346.5L364 341Q376 368 398 382Q420 390 434 364L446 363Q466 372 477 390Q485 420 483 460Q481 490 481 520H309z" fill="url(#armL)"/>
 <path d="M309 415Q322 436 340 440L309 448z" fill="#b88672" opacity="0.7"/>
 <!-- face -->
 <path d="M366 255Q365 214 410 210Q453 212 456 255Q458 290 449 311Q437 333 423 334Q398 331 385 318Q369 300 366 255z" fill="url(#skinF)"/>
 <!-- ear -->
 <path d="M360 257Q348 256 350 273Q352 289 366 292Q369 278 367 262z" fill="#d9a791"/>
 <!-- hair top -->
 <path d="M349 290Q345 232 372 204Q395 190 420 192Q448 196 458 232L456 246Q452 224 432 215Q410 208 388 215Q368 226 365 252L366 262Q358 258 353 268z" fill="#3d2b24"/>
 <path d="M362 214Q388 198 430 199" stroke="#5e463c" stroke-width="1.4" fill="none"/>
 <path d="M356 245Q360 225 376 210" stroke="#5e463c" stroke-width="1.1" fill="none"/>
 <!-- brows/eyes -->
 <path d="M385 250Q399 244 414 249" stroke="#7a5646" stroke-width="2" fill="none"/>
 <path d="M433 250Q446 245 455 250" stroke="#7a5646" stroke-width="1.8" fill="none"/>
 <ellipse cx="401" cy="261" rx="6.5" ry="2.6" fill="#8c7f7a"/>
 <ellipse cx="440" cy="259" rx="6" ry="2.6" fill="#8c7f7a"/>
 <circle cx="401" cy="261" r="1.8" fill="#4a4650"/>
 <circle cx="440" cy="259" r="1.8" fill="#4a4650"/>
 <!-- nose -->
 <path d="M424 262Q420 280 418 289Q426 295 434 289" stroke="#c79480" stroke-width="1.6" fill="none"/>
 <path d="M428 266Q432 278 430 284" stroke="#f6dccd" stroke-width="2" fill="none"/>
 <!-- mouth -->
 <path d="M402 297Q421 300 440 296Q437 314 419 315Q406 313 402 297z" fill="#a31f2a"/>
 <path d="M406 299.5Q421 302.5 436 299Q433 306 421 307Q411 305.5 406 299.5z" fill="#f4efea"/>
 <!-- jersey -->
 <path d="M331 346.5L364 341C366 390 398 410 421 410C438 409 445 392 442.7 371L434 358L446 363Q456 368 460 378Q468 395 471 410Q474 430 474.5 445L475 520H309V447Q330 445 345 436Q355 425 357.5 408Q357 390 355 382Q350 365 331 346.5z" fill="#b69568"/>
 <path d="M358 356L368 355C372 398 402 417 421 416C441 415 449 396 448 373Q452 371 453 373Q463 390 467 410Q471 430 471.5 447L473 520H309V500Q322 490 335 477Q346 462 352 441L355 437Q362 422 362 408Q363 390 362 384Q361 368 358 356z" fill="url(#redG)"/>
 <path d="M442 366Q446 372 445 382L449 374z" fill="#e88694"/>
 <!-- BLK -->
 <text x="371" y="418" font-family="Liberation Sans" font-weight="bold" font-size="12" fill="#fff" transform="translate(371 418) skewX(-6) translate(-371 -418)">BLK</text>
 <!-- badge -->
 <circle cx="461" cy="421" r="9.5" fill="none" stroke="#f5dfe2" stroke-width="2"/>
 <path d="M456 416Q461 426 466 417M456 426Q461 415 466 425" stroke="#f5dfe2" stroke-width="1.2" fill="none"/>
 <!-- Vitality -->
 <text x="408" y="478" font-family="Liberation Serif" font-style="italic" font-weight="bold" font-size="24" fill="#fbf4f5" letter-spacing="-1" transform="translate(408 478) scale(0.93 1.35) translate(-408 -478)">Vitality</text>
 <!-- pills -->
 <rect x="391" y="486" width="27" height="11" rx="5.5" fill="#f0d5d8"/>
 <rect x="463" y="493" width="11" height="12" rx="5" fill="#f0d5d8"/>
 <!-- swirl -->
 <path d="M318 481Q352 490 367 521H354Q340 500 314 491z" fill="#eedde2"/>
 <path d="M309 502Q321 497 331 505Q335 513 331 521H323Q326 511 309 511z" fill="#eedde2"/>
 <path d="M321 484Q326 478 333 476" stroke="#eedde2" stroke-width="2.5" fill="none"/>
 <!-- right arm -->
 <path d="M474 440Q483 470 479 520H476L472 445z" fill="#c9927c"/>
</svg>

<!-- guides -->
<div class="a" style="left:24px;top:133px;width:1103px;height:1px;background:#22c8c8"></div>
<div class="a" style="left:24px;top:160px;width:1103px;height:1px;background:#22c8c8"></div>
<div class="a" style="left:24px;top:600px;width:1103px;height:1px;background:#22c8c8"></div>
<div class="a" style="left:24px;top:628px;width:1103px;height:1px;background:#22c8c8"></div>
<div class="a" style="left:87px;top:133px;width:978px;height:1px;background:#2ff8f8"></div>
<div class="a" style="left:87px;top:160px;width:978px;height:1px;background:#2ff8f8"></div>
<div class="a" style="left:87px;top:600px;width:978px;height:1px;background:#2ff8f8"></div>
<div class="a" style="left:87px;top:628px;width:978px;height:1px;background:#2ff8f8"></div>
<div class="a" style="left:135px;top:50px;width:1px;height:658px;background:#2ff8f8"></div>
<div class="a" style="left:184px;top:50px;width:1px;height:658px;background:#2ff8f8"></div>
<div class="a" style="left:966px;top:50px;width:1px;height:658px;background:#2ff8f8"></div>
<div class="a" style="left:1015px;top:50px;width:1px;height:658px;background:#2ff8f8"></div>

<!-- marching ants -->
<div class="a" style="left:87px;top:106px;width:978px;height:1px;background:repeating-linear-gradient(90deg,#fff 0 1px,#444 1px 4px,#fff 4px 6px)"></div>
<div class="a" style="left:87px;top:655px;width:978px;height:1px;background:repeating-linear-gradient(90deg,#fff 0 1px,#444 1px 4px,#fff 4px 6px)"></div>
<div class="a" style="left:87px;top:106px;width:1px;height:550px;background:repeating-linear-gradient(180deg,#fff 0 1px,#444 1px 4px,#fff 4px 6px)"></div>
<div class="a" style="left:1064px;top:106px;width:1px;height:550px;background:repeating-linear-gradient(180deg,#fff 0 1px,#444 1px 4px,#fff 4px 6px)"></div>
<!-- handles -->
<svg style="left:87px;top:106px" width="13" height="13" viewBox="0 0 13 13"><path d="M1.5 11.5V1.5H11.5" stroke="#4a4a4a" stroke-width="1.2" fill="none"/></svg>
<svg style="left:1052px;top:643px" width="13" height="13" viewBox="0 0 13 13"><path d="M11.5 1.5V11.5H1.5" stroke="#4a4a4a" stroke-width="1.2" fill="none"/></svg>
<svg style="left:1052px;top:106px" width="13" height="13" viewBox="0 0 13 13"><path d="M11.5 11.5V1.5H1.5" stroke="#4a4a4a" stroke-width="1.2" fill="none"/></svg>
<svg style="left:87px;top:643px" width="13" height="13" viewBox="0 0 13 13"><path d="M1.5 1.5V11.5H11.5" stroke="#4a4a4a" stroke-width="1.2" fill="none"/></svg>
<div class="a" style="left:570px;top:106px;width:12px;height:3px;border:1px solid #666;background:#fff"></div>
<div class="a" style="left:570px;top:653px;width:12px;height:3px;border:1px solid #666;background:#fff"></div>
<div class="a" style="left:86px;top:376px;width:3px;height:11px;border:1px solid #666;background:#fff"></div>
<div class="a" style="left:1062px;top:376px;width:3px;height:11px;border:1px solid #666;background:#fff"></div>
<!-- crosshair -->
<svg style="left:571px;top:376px" width="11" height="11" viewBox="0 0 11 11">
 <path d="M5.5 0.5V3.5M5.5 7.5V10.5M0.5 5.5H3.5M7.5 5.5H10.5" stroke="#333" stroke-width="1.3"/>
 <circle cx="5.5" cy="5.5" r="1.7" fill="none" stroke="#777" stroke-width="0.8"/>
</svg>


<!-- History floating panel -->
<div class="a" style="left:979px;top:36px;width:163px;height:118px;background:rgba(0,0,0,0.25);filter:blur(1.5px)"></div>
<div class="a" style="left:981px;top:37px;width:159px;height:115px;background:#535353"></div>
<div class="a" style="left:981px;top:37px;width:159px;height:22px;background:#454545"></div>
<div class="a" style="left:981px;top:37px;width:43px;height:22px;background:#535353"></div>
<div class="t" style="left:988px;top:45px;font-size:8.3px;font-weight:bold;color:#e6e6e6">History</div>
<svg style="left:1110px;top:45px" width="8" height="6" viewBox="0 0 8 6"><path d="M1 0.5L3.5 3L1 5.5M4.5 0.5L7 3L4.5 5.5" stroke="#c8c8c8" stroke-width="1" fill="none"/></svg>
<div class="a" style="left:1122px;top:43px;width:1px;height:9px;background:#9a9a9a"></div>
<svg style="left:1128px;top:44px" width="8" height="7" viewBox="0 0 8 7"><path d="M0 1H8M0 3.5H8M0 6H8" stroke="#b8b8b8" stroke-width="1.2"/></svg>
<div class="a" style="left:1128px;top:63px;width:12px;height:63px;background:#4b4b4b"></div>
<svg style="left:984px;top:66px" width="13" height="12" viewBox="0 0 13 12">
 <path d="M12 0.5L7 6L6 5z" fill="#d8d8d8"/><path d="M5.5 5.5Q2.5 6.5 2 11Q6 10 7 7z" fill="#d8d8d8"/>
 <path d="M1 3Q3 1 5 2.5" stroke="#d8d8d8" stroke-width="0.9" fill="none"/>
</svg>
<div class="a" style="left:1001px;top:66px;width:23px;height:14px;background:#fff;border-radius:1px"></div>
<div class="a" style="left:1007px;top:67px;width:5px;height:5px;background:#5a3a30"></div>
<div class="a" style="left:1007px;top:72px;width:5px;height:6px;background:#d8202c;border-radius:1px"></div>
<div class="t" style="left:1028px;top:68px;font-size:8.3px;color:#dcdcdc">Opened mouth.psd</div>
<div class="a" style="left:981px;top:83px;width:147px;height:1px;background:#474747"></div>
<div class="a" style="left:981px;top:85px;width:147px;height:16px;background:#6a6a6a"></div>
<div class="a" style="left:986px;top:88px;width:9px;height:10px;border:1px solid #606060;background:#656565"></div>
<svg style="left:1005px;top:86px" width="13" height="14" viewBox="0 0 13 14"><path d="M1.5 1.5H8L11.5 4V12.5H1.5z" fill="#7a7a7a" stroke="#dadada" stroke-width="0.9"/><path d="M3.5 6H9.5M3.5 8.2H9.5M3.5 10.4H9.5" stroke="#dadada" stroke-width="0.8"/></svg>
<div class="t" style="left:1025px;top:89px;font-size:8.3px;color:#ececec">Open</div>
<div class="a" style="left:981px;top:126px;width:159px;height:1px;background:#3e3e3e"></div>
<svg style="left:1061px;top:130px" width="13" height="12" viewBox="0 0 13 12"><rect x="5" y="1" width="7" height="9" fill="#ddd"/><path d="M4.5 8V3" stroke="#535353" stroke-width="1.2"/><path d="M0.5 8H7M3.5 5V11" stroke="#ddd" stroke-width="1.4"/><path d="M7 3H10V6" stroke="#535353" stroke-width="0.8" fill="none"/></svg>
<svg style="left:1086px;top:131px" width="12" height="10" viewBox="0 0 12 10"><path d="M1 2.5H3.5L4.5 1H7.5L8.5 2.5H11V9H1z" fill="#ddd"/><circle cx="6" cy="5.7" r="2" fill="#535353"/><circle cx="6" cy="5.7" r="1.1" fill="#ddd"/></svg>
<svg style="left:1109px;top:130px" width="10" height="12" viewBox="0 0 10 12"><path d="M0.5 2.5H9.5M3.5 2.5V1H6.5V2.5" stroke="#cfcfcf" stroke-width="0.9" fill="none"/><path d="M1.8 3V11.2H8.2V3" stroke="#cfcfcf" stroke-width="1" fill="none"/><path d="M4 4.5V9.5M6 4.5V9.5" stroke="#cfcfcf" stroke-width="0.8"/></svg>
<div class="a" style="left:981px;top:145px;width:159px;height:7px;background:#4f4f4f;border-top:1px solid #3c3c3c"></div>
<div class="a" style="left:1052px;top:147px;width:16px;height:2px;background:repeating-linear-gradient(90deg,#3e3e3e 0 1.5px,transparent 1.5px 3px)"></div>

</body></html>
